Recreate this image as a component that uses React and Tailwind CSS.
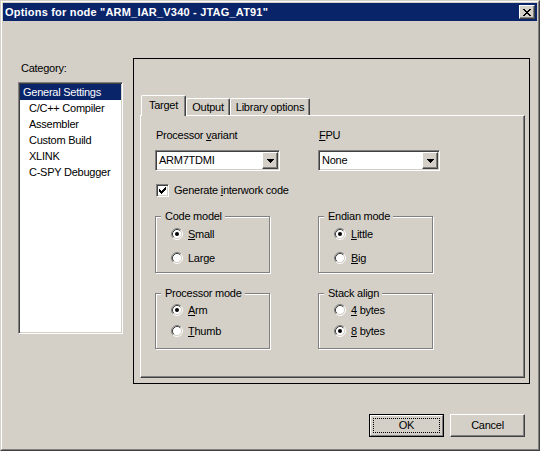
import React from 'react';

// mnemonic underline
const Mn = ({ children }) => <span className="underline decoration-1 underline-offset-[1px]">{children}</span>;

const Radio = ({ checked }) => (
    <svg width="12" height="12" viewBox="0 0 12 12" className="shrink-0">
        <circle cx="6" cy="6" r="4.5" fill="#fff" />
        <path d="M2.11 9.89 A5.5 5.5 0 0 1 9.89 2.11" fill="none" stroke="#808080" />
        <path d="M9.89 2.11 A5.5 5.5 0 0 1 2.11 9.89" fill="none" stroke="#fff" />
        <path d="M2.82 9.18 A4.5 4.5 0 0 1 9.18 2.82" fill="none" stroke="#404040" />
        <path d="M9.18 2.82 A4.5 4.5 0 0 1 2.82 9.18" fill="none" stroke="#d4d0c8" />
        {checked && <circle cx="6" cy="6" r="2" fill="#000" />}
    </svg>
);

const RadioRow = ({ checked, className, children }) => (
    <div className={`h-[16px] flex items-center ml-[10px] gap-[5px] ${className}`}>
        <Radio checked={checked} />
        <span className="leading-[13px]">{children}</span>
    </div>
);

const Group = ({ title, height, children }) => (
    <fieldset className={`w-[115px] ${height} m-0 min-w-0 p-0 pl-[5px] border border-[#808080] shadow-[inset_1px_1px_0_#fff,1px_1px_0_#fff]`}>
        <legend className="pl-[4px] pr-[3px] leading-[13px] bg-[#d4d0c8]">{title}</legend>
        {children}
    </fieldset>
);

const Combo = ({ value, width }) => (
    <div className={`${width} h-[21px] flex items-center bg-white border border-t-[#808080] border-l-[#808080] border-r-white border-b-white shadow-[inset_1px_1px_0_#404040,inset_-1px_-1px_0_#d4d0c8]`}>
        <span className="flex-1 pl-[3px] leading-[13px]">{value}</span>
        <div className="w-[16px] h-[17px] mr-[1px] flex items-center justify-center bg-[#d4d0c8] border border-t-white border-l-white border-r-[#404040] border-b-[#404040] shadow-[inset_-1px_-1px_0_#808080]">
            <svg width="7" height="4" viewBox="0 0 7 4" shapeRendering="crispEdges">
                <path d="M0 0h7v1h-7z M1 1h5v1h-5z M2 2h3v1h-3z M3 3h1v1h-1z" fill="#000" />
            </svg>
        </div>
    </div>
);

const categories = ['General Settings', 'C/C++ Compiler', 'Assembler', 'Custom Build', 'XLINK', 'C-SPY Debugger'];

export default function App() {
    return (
        <div className="w-[540px] h-[451px] bg-[#d4d0c8] border border-t-[#d4d0c8] border-l-[#d4d0c8] border-r-[#404040] border-b-[#404040] font-['Liberation_Sans',Arial,sans-serif] text-[11px] tracking-[-0.25px] text-black select-none">
            <div className="h-full flex flex-col p-[1px] border border-t-white border-l-white border-r-[#808080] border-b-[#808080]">
                {/* title bar */}
                <div className="h-[18px] shrink-0 flex items-center justify-between bg-[#0a246a] pl-[2px] pr-[2px]">
                    <span className="text-white font-bold leading-[13px] tracking-[0.2px]">Options for node "ARM_IAR_V340 - JTAG_AT91"</span>
                    <div className="w-[16px] h-[14px] flex items-center justify-center bg-[#d4d0c8] border border-t-white border-l-white border-r-[#404040] border-b-[#404040] shadow-[inset_-1px_-1px_0_#808080]">
                        <svg width="8" height="7" viewBox="0 0 8 7" shapeRendering="crispEdges">
                            <path d="M0 0h2v1h-2z M6 0h2v1h-2z M1 1h2v1h-2z M5 1h2v1h-2z M2 2h4v1h-4z M3 3h2v1h-2z M2 4h4v1h-4z M1 5h2v1h-2z M5 5h2v1h-2z M0 6h2v1h-2z M6 6h2v1h-2z" fill="#000" />
                        </svg>
                    </div>
                </div>

                {/* body */}
                <div className="flex items-start pl-[15px] pr-[7px]">
                    <div className="w-[105px] mt-[41px] flex flex-col">
                        <span className="ml-[3px] leading-[13px]">Category:</span>
                        <div className="mt-[7px] h-[252px] p-[1px] bg-white border border-t-[#808080] border-l-[#808080] border-r-white border-b-white shadow-[inset_1px_1px_0_#404040,inset_-1px_-1px_0_#d4d0c8]">
                            {categories.map((c, i) => (
                                <div
                                    key={c}
                                    className={`h-[16px] leading-[16px] whitespace-nowrap ${i === 0 ? 'bg-[#0a246a] text-white pl-[3px]' : 'pl-[9px]'}`}
                                >
                                    {c}
                                </div>
                            ))}
                        </div>
                    </div>

                    <div className="w-[397px] h-[326px] mt-[37px] ml-[10px] border border-black pt-[36px] pl-[6px] pr-[4px] pb-[5px] flex flex-col">
                        {/* tabs */}
                        <div className="h-[20px] flex items-end pl-[1px] relative z-10">
                            <div className="w-[45px] h-[21px] -mb-[1px] pt-[3px] text-center leading-[13px] bg-[#d4d0c8] rounded-t-[2px] border-t border-l border-r border-t-white border-l-white border-r-[#404040] shadow-[inset_-1px_0_0_#808080]">
                                Target
                            </div>
                            <div className="w-[44px] h-[17px] pt-[2px] text-center leading-[13px] rounded-t-[2px] border-t border-l border-r border-t-white border-l-white border-r-[#404040] shadow-[inset_-1px_0_0_#808080]">
                                Output
                            </div>
                            <div className="w-[80px] h-[17px] pt-[2px] text-center leading-[13px] rounded-t-[2px] border-t border-l border-r border-t-white border-l-white border-r-[#404040] shadow-[inset_-1px_0_0_#808080]">
                                Library options
                            </div>
                        </div>

                        {/* tab page */}
                        <div className="h-[263px] pt-[13px] pl-[14px] border border-t-white border-l-white border-r-[#404040] border-b-[#404040] shadow-[inset_-1px_-1px_0_#808080]">
                            <div className="grid grid-cols-[163px_auto]">
                                <span className="ml-[1px] leading-[13px]">Processor <Mn>v</Mn>ariant</span>
                                <span className="ml-[1px] leading-[13px]"><Mn>F</Mn>PU</span>
                                <div className="mt-[8px]"><Combo value="ARM7TDMI" width="w-[125px]" /></div>
                                <div className="mt-[8px]"><Combo value="None" width="w-[122px]" /></div>
                            </div>

                            <div className="mt-[13px] h-[13px] ml-[1px] flex items-center gap-[5px]">
                                <div className="w-[13px] h-[13px] flex items-center justify-center bg-white border border-t-[#808080] border-l-[#808080] border-r-white border-b-white shadow-[inset_1px_1px_0_#404040,inset_-1px_-1px_0_#d4d0c8]">
                                    <svg width="7" height="7" viewBox="0 0 7 7" shapeRendering="crispEdges">
                                        <path d="M6 0h1v1h-1z M5 1h2v1h-2z M0 2h1v1h-1z M4 2h3v1h-3z M0 3h2v1h-2z M3 3h3v1h-3z M0 4h5v1h-5z M1 5h3v1h-3z M2 6h1v1h-1z" fill="#000" />
                                    </svg>
                                </div>
                                <span className="leading-[13px]">Generate <Mn>i</Mn>nterwork code</span>
                            </div>

                            <div className="mt-[13px] grid grid-cols-[163px_auto] gap-y-[14px]">
                                <Group title="Code model" height="h-[63px]">
                                    <RadioRow checked className="mt-[3px]"><Mn>S</Mn>mall</RadioRow>
                                    <RadioRow className="mt-[8px]">Lar<Mn>g</Mn>e</RadioRow>
                                </Group>
                                <Group title="Endian mode" height="h-[63px]">
                                    <RadioRow checked className="mt-[3px]"><Mn>L</Mn>ittle</RadioRow>
                                    <RadioRow className="mt-[8px]"><Mn>B</Mn>ig</RadioRow>
                                </Group>
                                <Group title="Processor mode" height="h-[62px]">
                                    <RadioRow checked className="mt-[2px]"><Mn>A</Mn>rm</RadioRow>
                                    <RadioRow className="mt-[5px]"><Mn>T</Mn>humb</RadioRow>
                                </Group>
                                <Group title="Stack align" height="h-[62px]">
                                    <RadioRow className="mt-[2px]"><Mn>4</Mn> bytes</RadioRow>
                                    <RadioRow checked className="mt-[5px]"><Mn>8</Mn> bytes</RadioRow>
                                </Group>
                            </div>
                        </div>
                    </div>
                </div>

                {/* buttons */}
                <div className="mt-[30px] flex justify-end gap-[6px] pr-[12px]">
                    <div className="w-[75px] h-[23px] border border-black">
                        <div className="h-full p-[2px] border border-t-white border-l-white border-r-[#808080] border-b-[#808080]">
                            <div className="h-full flex items-center justify-center border border-dotted border-black leading-[13px]">OK</div>
                        </div>
                    </div>
                    <div className="w-[75px] h-[23px] flex items-center justify-center leading-[13px] border border-t-white border-l-white border-r-[#404040] border-b-[#404040] shadow-[inset_-1px_-1px_0_#808080]">
                        Cancel
                    </div>
                </div>
            </div>
        </div>
    );
}
